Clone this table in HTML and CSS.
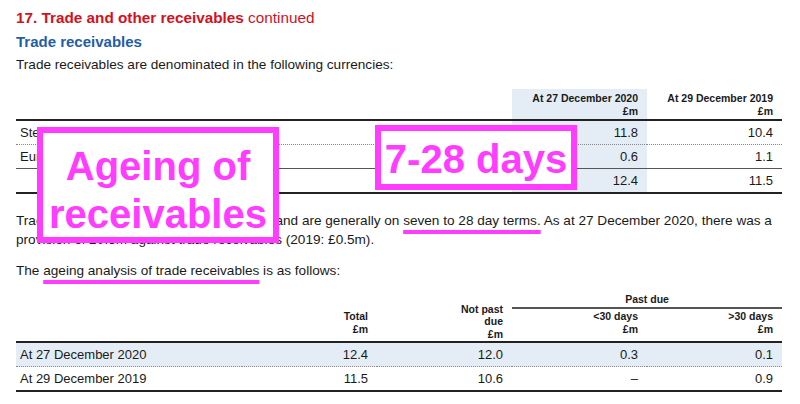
FILE: index.html
```html
<!DOCTYPE html>
<html>
<head>
<meta charset="utf-8">
<link rel="stylesheet" href="styles.css">
</head>
<body>
<div class="page">
  <h1 class="title"><b>17. Trade and other receivables</b> continued</h1>
  <h2 class="subtitle">Trade receivables</h2>
  <p class="text intro">Trade receivables are denominated in the following currencies:</p>

  <table class="tbl cur">
    <colgroup><col class="c-label"><col class="c-num"><col class="c-num"></colgroup>
    <thead>
      <tr>
        <th></th>
        <th class="shade">At 27 December 2020<br>£m</th>
        <th>At 29 December 2019<br>£m</th>
      </tr>
    </thead>
    <tbody>
      <tr class="dot"><td>Sterling</td><td class="shade">11.8</td><td>10.4</td></tr>
      <tr class="solid"><td>Euro</td><td class="shade">0.6</td><td>1.1</td></tr>
      <tr><td></td><td class="shade">12.4</td><td>11.5</td></tr>
    </tbody>
  </table>

  <p class="text para">Trade receivables are non-interest bearing and are generally on <span class="mark-a">seven to 28 day terms.</span> As at 27 December 2020, there was a provision of £0.3m against trade receivables (2019: £0.5m).</p>

  <p class="text para2">The <span class="mark-b">ageing analysis of trade receivables</span> is as follows:</p>

  <table class="tbl age">
    <colgroup><col class="c-label2"><col class="c-num"><col class="c-num"><col class="c-num"><col class="c-num"></colgroup>
    <thead>
      <tr class="h1">
        <th></th><th></th><th class="np" rowspan="2">Not past<br>due<br>£m</th>
        <th colspan="2" class="pd">Past due</th>
      </tr>
      <tr class="h2">
        <th></th><th>Total<br>£m</th>
        <th>&lt;30 days<br>£m</th><th>&gt;30 days<br>£m</th>
      </tr>
    </thead>
    <tbody>
      <tr class="dot hl"><td>At 27 December 2020</td><td>12.4</td><td>12.0</td><td>0.3</td><td>0.1</td></tr>
      <tr><td>At 29 December 2019</td><td>11.5</td><td>10.6</td><td>–</td><td>0.9</td></tr>
    </tbody>
  </table>

  <div class="callout callout-a">Ageing of<br>receivables</div>
  <div class="callout callout-b">7-28 days</div>
</div>
</body>
</html>
```

FILE: styles.css
```css
html, body {
  margin: 0;
  padding: 0;
  background: #fff;
}
body {
  font-family: "Liberation Sans", Arial, sans-serif;
  color: #1a1a1a;
}
.page {
  position: relative;
  width: 766px;
  padding: 8px 0 0 16px;
}
.title {
  margin: 0;
  font-size: 15.3px;
  line-height: 20px;
  font-weight: normal;
  color: #d3101e;
}
.title b { font-weight: bold; }
.subtitle {
  margin: 4px 0 0;
  font-size: 15px;
  line-height: 20px;
  font-weight: bold;
  color: #1f5ea8;
}
.text {
  margin: 0;
  font-size: 13.6px;
  line-height: 19px;
}
.intro { margin-top: 3px; }

.tbl {
  width: 766px;
  border-collapse: collapse;
  table-layout: fixed;
  font-size: 13px;
}
.c-label { width: 496px; }
.c-num { width: 135px; }
.c-label2 { width: 226px; }
.tbl th {
  font-size: 10.5px;
  font-weight: bold;
  line-height: 13px;
  text-align: right;
  padding: 0 9px;
  vertical-align: bottom;
}
.tbl td {
  text-align: right;
  padding: 0 9px;
  height: 23px;
  line-height: 23px;
}
.tbl td:first-child {
  text-align: left;
  padding-left: 4px;
}
.cur { margin-top: 15px; }
.cur thead th {
  height: 31px;
  padding-bottom: 1px;
  box-sizing: border-box;
}
.cur thead tr { border-bottom: 2px solid #222; }
.shade { background: #e4edf5; }
.dot { border-bottom: 1px dotted #888; }
.solid { border-bottom: 1px solid #555; }
.cur tbody tr:last-child { border-bottom: 2px solid #222; }

.para { margin-top: 17px; }
.para2 { margin-top: 12px; }
.mark-a, .mark-b {
  text-decoration: underline;
  text-decoration-color: #ff3cff;
  text-decoration-thickness: 4px;
  text-underline-offset: 5px;
}

.age { margin-top: 10px; }
.age .h1 th { height: 16px; vertical-align: bottom; padding-bottom: 1px; }
.age .np { padding-bottom: 5px; line-height: 12.5px; }
.age .pd {
  text-align: center;
  padding: 0 0 3px 0;
  border-bottom: 2px solid #555;
}
.age .h2 th { padding-top: 1px; padding-bottom: 5px; }
.age thead tr.h2 { border-bottom: 2px solid #222; }
.age .hl { background: #e4edf5; }
.age tbody tr:last-child { border-bottom: 2px solid #222; }

.callout {
  position: absolute;
  border: 6px solid #ff3cff;
  background: #fff;
  color: #ff3cff;
  font-family: "Liberation Sans", Arial, sans-serif;
  font-weight: bold;
  font-size: 40px;
  text-align: center;
  box-sizing: border-box;
}
.callout-a {
  left: 37px;
  top: 127px;
  width: 242px;
  height: 116px;
  line-height: 48px;
  padding-top: 9px;
}
.callout-b {
  left: 375px;
  top: 125px;
  width: 202px;
  height: 65px;
  line-height: 56px;
}
```
